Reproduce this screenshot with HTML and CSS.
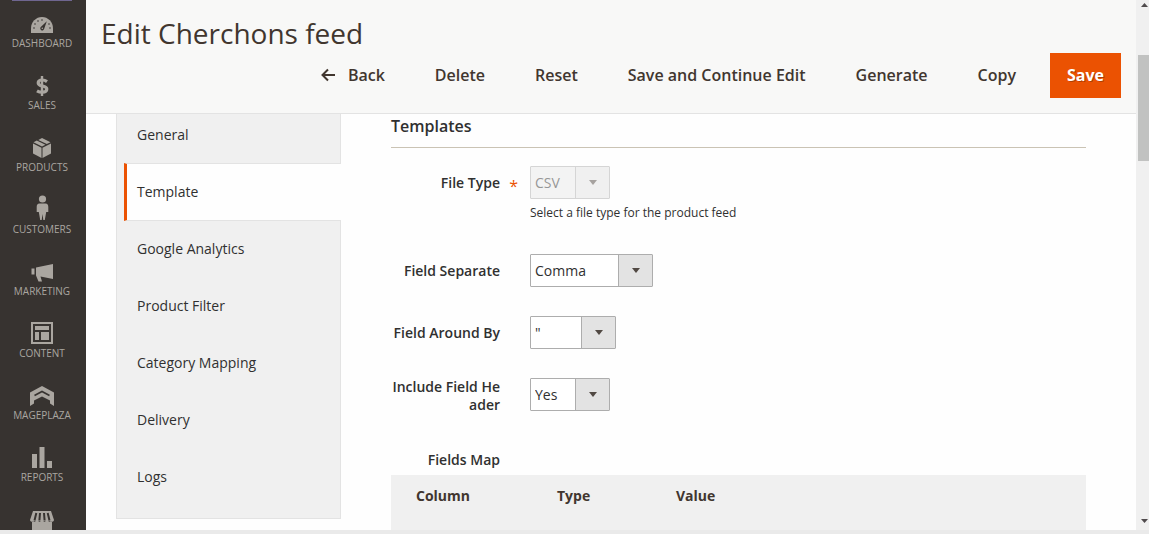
FILE: index.html
```html
<!DOCTYPE html>
<html lang="en">
<head>
  <meta charset="UTF-8" />
  <meta name="viewport" content="width=device-width, initial-scale=1.0"/>
  <title>Edit Cherchons feed</title>
  <link rel="stylesheet" href="styles.css">
</head>
<body>
  <div class="app">
    <!-- Admin menu -->
    <nav class="menu">
      <div class="menu-logo"></div>
      <a class="menu-item" href="#">
        <svg width="24" height="22" viewBox="0 -2 24 22">
          <path fill="#aaa6a0" d="M1 18v-4.500a11 11.500 0 0 1 22 0V18z"/>
          <g fill="#373330">
            <circle cx="4" cy="13" r="0.800"/><circle cx="5" cy="9" r="0.800"/><circle cx="8" cy="6" r="0.800"/>
            <circle cx="12" cy="5" r="0.800"/><circle cx="19" cy="9" r="0.800"/><circle cx="20" cy="13" r="0.800"/>
            <path d="M16.800 6.200l-2.600 7.600a2 2 0 1 1-3.400-1.800z"/>
          </g>
          <circle cx="12.300" cy="13.200" r="0.800" fill="#aaa6a0"/>
        </svg>
        <span>Dashboard</span>
      </a>
      <a class="menu-item" href="#">
        <svg width="24" height="22" viewBox="0 0 24 22">
          <path fill="none" stroke="#aaa6a0" stroke-width="3.200" d="M17 6.600C15.500 5.500 14 5 12.300 5 9.800 5 8.200 6 8.200 7.900c0 4.200 8.600 2 8.600 6.200 0 2-1.900 3.100-4.500 3.100-2 0-3.800-.5-5.300-1.400"/>
          <path stroke="#aaa6a0" stroke-width="2.400" d="M12 1v20"/>
        </svg>
        <span>Sales</span>
      </a>
      <a class="menu-item" href="#">
        <svg width="24" height="22" viewBox="0 0 24 22">
          <g fill="#aaa6a0">
            <path d="M3 6.500l8.500 4.300V21L3 16.500z"/>
            <path d="M21 6.500l-8.500 4.300V21l8.500-4.500z"/>
            <path d="M3.500 5.300L6.800 3.600l8.600 4.200L12 9.600z"/>
            <path d="M8.300 2.900L12 1l8.500 4.300-3.700 1.800z"/>
          </g>
        </svg>
        <span>Products</span>
      </a>
      <a class="menu-item" href="#">
        <svg width="24" height="26" viewBox="0 0 24 26">
          <g fill="#aaa6a0">
            <circle cx="12.500" cy="4" r="3.600"/>
            <path d="M9.500 8.500h6c2 0 2.800 1.500 2.800 3.500v5h-2.100l-1.400 8h-1.500l-.8-6-.8 6h-1.500l-1.400-8H6.700v-5c0-2 .8-3.500 2.800-3.500z"/>
          </g>
        </svg>
        <span>Customers</span>
      </a>
      <a class="menu-item" href="#">
        <svg width="24" height="20" viewBox="0 0 24 20">
          <g fill="#aaa6a0">
            <path d="M23 1v15L10.500 13.500l1.500 5H8.500L6 12.500v-8z"/>
            <path d="M1.500 5.500h3v6h-3z"/>
          </g>
        </svg>
        <span>Marketing</span>
      </a>
      <a class="menu-item" href="#">
        <svg width="24" height="24" viewBox="0 0 24 24">
          <path fill="none" stroke="#aaa6a0" stroke-width="2" d="M2 2h20v20H2z"/>
          <path fill="#aaa6a0" d="M5 5h14v4H5zM5 11h4v8H5zM11 11h8v8h-8z"/>
        </svg>
        <span>Content</span>
      </a>
      <a class="menu-item" href="#">
        <svg width="24" height="22" viewBox="0 -1 24 22">
          <path fill="#aaa6a0" d="M0 6.500L12 0l12 6.500V20l-4-2.500v-3L12 10.500l-8 4v3L0 20z"/>
          <path fill="none" stroke="#373330" stroke-width="1.600" d="M4.500 9.500L12 5.500l7.500 4"/>
        </svg>
        <span>Mageplaza</span>
      </a>
      <a class="menu-item" href="#">
        <svg width="24" height="22" viewBox="0 0 24 22">
          <path fill="#aaa6a0" d="M2 7h5v14H2zM9.500 0h5v21h-5zM17 14h5v7h-5z"/>
        </svg>
        <span>Reports</span>
      </a>
      <a class="menu-item menu-item-last" href="#" aria-label="Stores">
        <svg width="24" height="22" viewBox="0 0 24 22">
          <path fill="#aaa6a0" d="M3 1h18l3 9c0 2-4 2.500-4.500 1-.5 1.500-4.500 1.500-5 0-.5 1.500-4.500 1.500-5 0-.5 1.500-4.500 1.500-5 0C4 12.500 0 12 0 10zM2 12h20v10H2z"/>
          <path stroke="#373330" stroke-width="2" d="M6.300 3L4.500 10.500M10 3l-.6 7.500M14 3l.6 7.500M17.700 3l1.800 7.500"/>
        </svg>
      </a>
    </nav>

    <div class="page">
      <header class="page-header">
        <h1>Edit Cherchons feed</h1>
        <div class="page-actions">
          <button class="action" type="button">
            <svg width="16" height="14" viewBox="0 0 16 14">
              <path fill="none" stroke="#41362f" stroke-width="2" d="M15 7H2.500M8 1.500L2.500 7 8 12.500"/>
            </svg>
            Back
          </button>
          <button class="action" type="button">Delete</button>
          <button class="action" type="button">Reset</button>
          <button class="action" type="button">Save and Continue Edit</button>
          <button class="action" type="button">Generate</button>
          <button class="action" type="button">Copy</button>
          <button class="action action-primary" type="button">Save</button>
        </div>
      </header>

      <main class="content">
        <nav class="tabs">
          <a class="tab" href="#">General</a>
          <a class="tab tab-active" href="#">Template</a>
          <a class="tab" href="#">Google Analytics</a>
          <a class="tab" href="#">Product Filter</a>
          <a class="tab" href="#">Category Mapping</a>
          <a class="tab" href="#">Delivery</a>
          <a class="tab" href="#">Logs</a>
        </nav>

        <form class="form">
          <h2>Templates</h2>
          <div class="field">
            <label class="required" for="file-type">File Type</label>
            <div class="control">
              <select class="short" id="file-type" disabled><option>CSV</option></select>
              <p class="note">Select a file type for the product feed</p>
            </div>
          </div>
          <div class="field">
            <label for="separate">Field Separate</label>
            <div class="control">
              <select class="long" id="separate"><option>Comma</option></select>
            </div>
          </div>
          <div class="field">
            <label for="around">Field Around By</label>
            <div class="control">
              <select class="medium" id="around"><option>"</option></select>
            </div>
          </div>
          <div class="field">
            <label class="two-lines" for="include-header">Include Field Header</label>
            <div class="control">
              <select class="short" id="include-header"><option>Yes</option></select>
            </div>
          </div>
          <div class="map-title" id="map-title">Fields Map</div>
          <table class="map" aria-labelledby="map-title">
            <thead>
              <tr>
                <th class="col-column">Column</th>
                <th class="col-type">Type</th>
                <th>Value</th>
              </tr>
            </thead>
          </table>
        </form>
      </main>
    </div>

    <!-- Scrollbar -->
    <div class="scrollbar">
      <svg width="9" height="5" viewBox="0 0 9 5"><path fill="#504b4d" d="M1 4h7L4.500 0z"/></svg>
      <div class="scrollbar-thumb"></div>
      <svg class="scrollbar-down" width="9" height="5" viewBox="0 0 9 5"><path fill="#504b4d" d="M1 0h7L4.500 4z"/></svg>
    </div>
  </div>
</body>
</html>
```
FILE: styles.css
```css
* {
  box-sizing: border-box;
}

body {
  margin: 0;
  font-family: 'Open Sans', sans-serif;
  font-size: 14px;
  color: #303030;
  background-color: #eaeaea;
}

.app {
  display: flex;
  height: calc(100vh - 4px);
  overflow: hidden;
  background-color: #fefefe;
}

/* Admin menu */
.menu {
  width: 86px;
  flex-shrink: 0;
  padding-right: 2px;
  background-color: #373330;
}

.menu-logo {
  height: 1px;
  margin: 0 12px;
  background-color: #6f6690;
}

.menu-item {
  display: flex;
  flex-direction: column;
  align-items: center;
  justify-content: flex-end;
  height: 62px;
  color: #aaa6a0;
  font-size: 10px;
  line-height: 12px;
  text-transform: uppercase;
  text-decoration: none;
}

.menu-logo + .menu-item {
  height: 48px;
}

.menu-item svg {
  margin-bottom: 2px;
}

.menu-item-last {
  height: 51px;
}

.page {
  flex: 1;
  min-width: 0;
  display: flex;
  flex-direction: column;
}

/* Page header */
.page-header {
  flex-shrink: 0;
  padding: 14px 15px 15px;
  background-color: #f8f8f7;
  border-bottom: 1px solid #e3e3e3;
}

h1 {
  margin: 0;
  font-size: 28px;
  font-weight: 400;
  line-height: 39px;
  color: #41362f;
}

.page-actions {
  display: flex;
  justify-content: flex-end;
  gap: 18px;
}

.action {
  display: flex;
  align-items: center;
  gap: 12px;
  height: 45px;
  padding: 0 16px 2px;
  border: none;
  background: none;
  font-family: inherit;
  font-size: 16px;
  font-weight: 600;
  color: #41362f;
  cursor: pointer;
}

.action-primary {
  padding: 0 17px 2px;
  background-color: #eb5202;
  color: #ffffff;
  font-weight: 700;
  text-shadow: 1px 1px 0 rgba(0, 0, 0, 0.25);
}

.content {
  flex: 1;
  min-height: 0;
  display: flex;
  align-items: flex-start;
  overflow: hidden;
  padding: 0 50px 0 30px;
  gap: 50px;
}

/* Tabs */
.tabs {
  width: 225px;
  flex-shrink: 0;
  margin-top: -8px;
  padding-bottom: 12px;
  background-color: #f0f0f0;
  border: 1px solid #e3e3e3;
}

.tab {
  display: block;
  height: 57px;
  padding: 18px 20px;
  line-height: 20px;
  color: #303030;
  text-decoration: none;
}

.tab-active {
  height: 58px;
  margin: -1px -1px 0 7px;
  padding-left: 10px;
  background-color: #fefefe;
  border-top: 1px solid #e3e3e3;
  border-bottom: 1px solid #e3e3e3;
  border-left: 3px solid #eb5202;
}

/* Form */
.form {
  flex: 1;
  min-width: 0;
}

h2 {
  margin: 0 0 18px;
  padding-bottom: 8px;
  border-bottom: 1px solid #cac3b4;
  font-size: 16px;
  font-weight: 600;
  line-height: 25px;
}

.field {
  display: flex;
  gap: 30px;
  margin-bottom: 29px;
}

label,
.map-title {
  width: 109px;
  flex-shrink: 0;
  font-weight: 600;
  line-height: 18px;
  text-align: right;
}

label {
  padding-top: 8px;
  word-break: break-all;
}

.two-lines {
  padding-top: 0;
}

.required {
  position: relative;
}

.required::after {
  content: '*';
  position: absolute;
  right: -18px;
  top: 11px;
  color: #eb5202;
  font-size: 16px;
  font-weight: 400;
}

select {
  display: block;
  height: 33px;
  padding: 0 38px 0 4px;
  appearance: none;
  border: 1px solid #adadad;
  border-radius: 1px;
  background-color: #ffffff;
  background-image:
    url("data:image/svg+xml,%3Csvg xmlns='http://www.w3.org/2000/svg' width='8' height='5'%3E%3Cpath d='M0 0h8L4 5z' fill='%23514943'/%3E%3C/svg%3E"),
    linear-gradient(to right, #adadad 1px, #e3e3e3 1px);
  background-position: right 12px center, right center;
  background-repeat: no-repeat;
  background-size: 8px 5px, 34px 100%;
  font-family: inherit;
  font-size: 14px;
  color: #303030;
}

select:disabled {
  opacity: 0.5;
  background-color: #e9e9e9;
}

.short {
  width: 80px;
}

.medium {
  width: 86px;
}

.long {
  width: 123px;
}

.note {
  margin: 5px 0 4px;
  font-size: 12px;
  line-height: 17px;
}

.map-title {
  margin-top: 37px;
  padding-bottom: 6px;
}

.map {
  width: 100%;
  height: 70px;
  border-collapse: collapse;
  background-color: #f0f0f0;
}

th {
  padding: 11px 0 0 25px;
  font-weight: 700;
  line-height: 20px;
  text-align: left;
  vertical-align: top;
  color: #41362f;
}

.col-column {
  width: 141px;
}

.col-type {
  width: 119px;
}

/* Scrollbar */
.scrollbar {
  display: flex;
  flex-direction: column;
  width: 13px;
  flex-shrink: 0;
  padding: 3px 0 6px 2px;
  background-color: #f0f0f0;
}

.scrollbar svg {
  margin-left: 2px;
}

.scrollbar-thumb {
  height: 106px;
  margin-top: 47px;
  background-color: #c1c2c1;
}

.scrollbar-down {
  margin-top: auto;
}
```
